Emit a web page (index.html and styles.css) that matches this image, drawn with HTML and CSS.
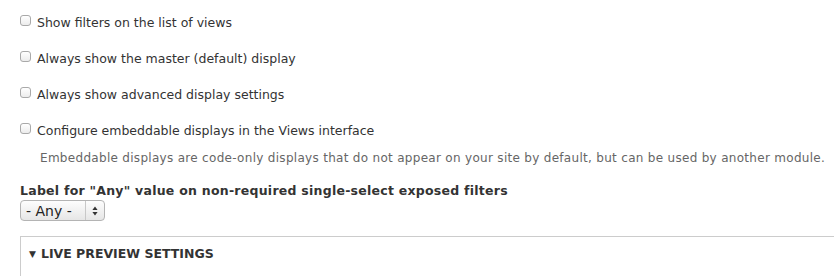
FILE: index.html
```html
<!DOCTYPE html>
<html lang="en">
<head>
<meta charset="utf-8">
<title>Views settings</title>
<link rel="stylesheet" href="styles.css">
</head>
<body>
<form class="page">
  <div class="options">
    <div class="option">
      <input type="checkbox" class="cb" id="o1">
      <label for="o1">Show filters on the list of views</label>
    </div>
    <div class="option">
      <input type="checkbox" class="cb" id="o2">
      <label for="o2">Always show the master (default) display</label>
    </div>
    <div class="option">
      <input type="checkbox" class="cb" id="o3">
      <label for="o3">Always show advanced display settings</label>
    </div>
    <div class="option">
      <input type="checkbox" class="cb" id="o4">
      <label for="o4">Configure embeddable displays in the Views interface</label>
    </div>
  </div>
  <div class="description">Embeddable displays are code-only displays that do not appear on your site by default, but can be used by another module.</div>

  <div class="select-item">
    <label class="field-label" for="any">Label for "Any" value on non-required single-select exposed filters</label>
    <div class="select-wrap">
      <select id="any" class="select">
        <option>- Any -</option>
        <option>&lt;Any&gt;</option>
      </select>
      <span class="select-arrows">
        <svg width="6" height="10" viewBox="0 0 6 10"><path d="M3 0.6 L5.6 3.9 L0.4 3.9 Z M3 9.4 L5.6 6.1 L0.4 6.1 Z" fill="#333"/></svg>
      </span>
    </div>
  </div>

  <div class="fieldset">
    <div class="legend"><span class="caret">▼</span>LIVE PREVIEW SETTINGS</div>
  </div>
</form>
</body>
</html>
```

FILE: styles.css
```css
html, body {
  margin: 0;
  padding: 0;
  background: #fff;
  overflow: hidden;
}

body {
  font-family: "DejaVu Sans", "Liberation Sans", sans-serif;
  font-size: 12.5px;
  line-height: 16px;
  color: #333;
}

.page {
  padding: 5px 0 0 20px;
}

.options {
  display: flex;
  flex-direction: column;
}

.option {
  display: flex;
  align-items: center;
  gap: 6px;
  height: 36px;
}

.cb {
  -webkit-appearance: none;
  appearance: none;
  box-sizing: border-box;
  width: 11px;
  height: 11px;
  margin: 0 0 6px 0;
  border: 1px solid #a9a9a9;
  border-radius: 3px;
  background: linear-gradient(#ffffff, #ececec);
  flex: none;
}

.description {
  margin: 1px 0 0 20px;
  font-size: 12px;
  letter-spacing: 0.3px;
  line-height: 16px;
  color: #666;
}

.select-item {
  margin-top: 17px;
  display: flex;
  flex-direction: column;
  align-items: flex-start;
}

.field-label {
  font-weight: bold;
  letter-spacing: 0.25px;
  line-height: 16px;
  margin-bottom: 1px;
}

.select-wrap {
  position: relative;
  width: 85px;
  height: 21px;
}

.select {
  -webkit-appearance: none;
  appearance: none;
  box-sizing: border-box;
  width: 85px;
  height: 21px;
  margin: 0;
  padding: 0 0 0 5px;
  border: 1px solid #b4b4b4;
  border-radius: 4px;
  background: linear-gradient(#fdfdfd, #e6e6e6);
  font-family: "DejaVu Sans", "Liberation Sans", sans-serif;
  font-size: 14px;
  color: #222;
}

.select-arrows {
  position: absolute;
  top: 1px;
  right: 1px;
  width: 18px;
  height: 19px;
  border-left: 1px solid #c8c8c8;
  display: flex;
  align-items: center;
  justify-content: center;
  pointer-events: none;
}

.fieldset {
  margin-top: 15px;
  border: 1px solid #cccccc;
  border-right: none;
  border-bottom: none;
  padding: 9px 0 30px 8px;
}

.legend {
  font-weight: bold;
  font-size: 12.5px;
  line-height: 16px;
  color: #333;
}

.caret {
  font-size: 9px;
  margin-right: 5px;
  position: relative;
  top: -1px;
}
```
